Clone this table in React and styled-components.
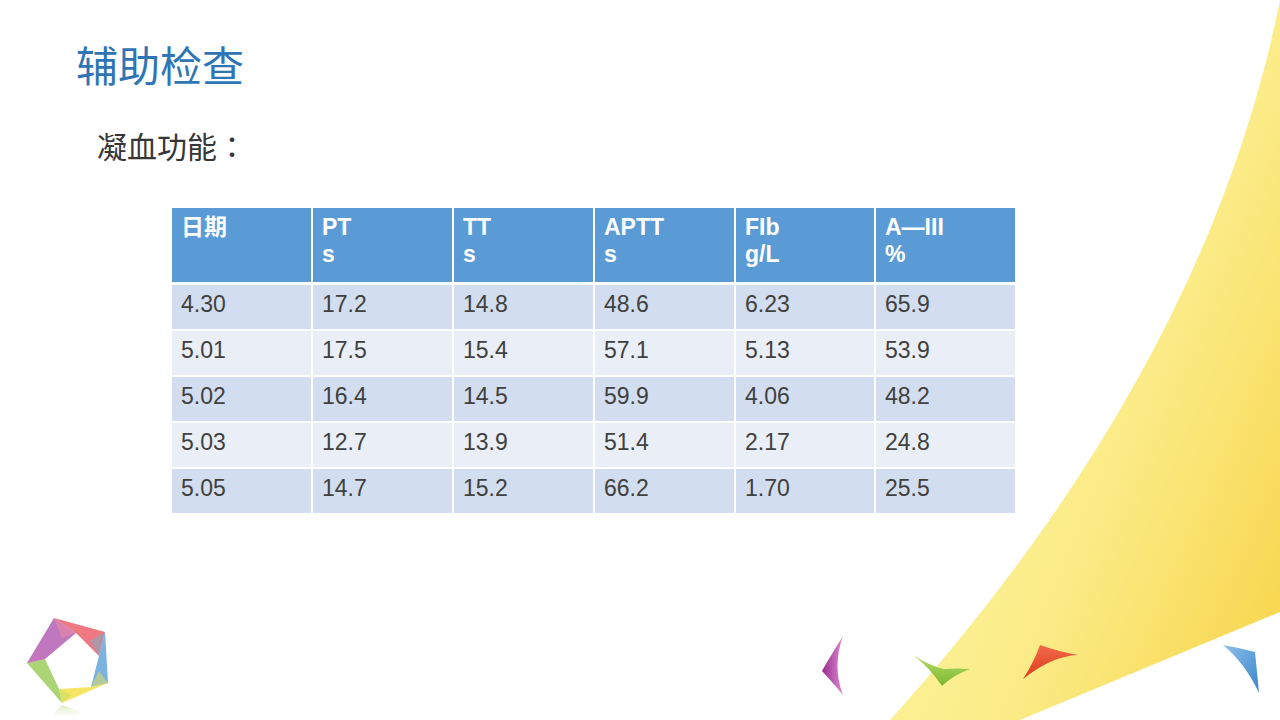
import React from 'react';
import styled, { createGlobalStyle } from 'styled-components';

const GlobalStyle = createGlobalStyle`
  html, body {
    margin: 0;
    padding: 0;
    background: #ffffff;
  }
`;

const Slide = styled.div`
  position: relative;
  width: 1280px;
  height: 720px;
  overflow: hidden;
  background: #ffffff;
  font-family: "Liberation Sans", "Noto Sans CJK SC", sans-serif;
`;

const Backdrop = styled.svg`
  position: absolute;
  left: 0;
  top: 0;
  width: 1280px;
  height: 720px;
  pointer-events: none;
`;

const Content = styled.div`
  position: relative;
  display: flex;
  flex-direction: column;
  padding: 43px 0 0 76px;
`;

const Title = styled.h1`
  margin: 0;
  font-family: "Noto Sans CJK SC", sans-serif;
  font-size: 42px;
  line-height: 42px;
  font-weight: 400;
  color: #2f75b5;
`;

const Subtitle = styled.h2`
  margin: 45px 0 0 21px;
  font-family: "Noto Sans CJK SC", sans-serif;
  font-size: 30px;
  line-height: 31px;
  font-weight: 400;
  color: #363636;
`;

const Colon = styled.span`
  font-family: "Noto Sans CJK TC", sans-serif;
`;

const Table = styled.table`
  margin: 47px 0 0 96px;
  border-collapse: separate;
  border-spacing: 0;
  table-layout: fixed;
  width: 843px;
  font-family: "Liberation Sans", "Noto Sans CJK SC", sans-serif;
  font-size: 23px;
  line-height: 27px;
`;

const Col = styled.col`
  width: ${(p) => p.$w}px;
`;

const HeadCell = styled.th`
  border-right: 2px solid #ffffff;
  border-bottom: 3px solid #ffffff;
  &:last-child {
    border-right: none;
  }
  background: #5b9bd5;
  color: #ffffff;
  font-weight: 700;
  text-align: left;
  vertical-align: top;
  padding: 6px 9px 14px;
  height: 54px;
`;

const Cell = styled.td`
  border-right: 2px solid #ffffff;
  border-bottom: 2px solid #ffffff;
  &:last-child {
    border-right: none;
  }
  background: ${(p) => (p.$odd ? '#d2deef' : '#eaeff7')};
  color: #404040;
  text-align: left;
  vertical-align: top;
  padding: 6px 9px 11px;
  height: 27px;
`;

const headers = [
  ['日期'],
  ['PT', 's'],
  ['TT', 's'],
  ['APTT', 's'],
  ['FIb', 'g/L'],
  ['A—III', '%'],
];

const rows = [
  ['4.30', '17.2', '14.8', '48.6', '6.23', '65.9'],
  ['5.01', '17.5', '15.4', '57.1', '5.13', '53.9'],
  ['5.02', '16.4', '14.5', '59.9', '4.06', '48.2'],
  ['5.03', '12.7', '13.9', '51.4', '2.17', '24.8'],
  ['5.05', '14.7', '15.2', '66.2', '1.70', '25.5'],
];

const colWidths = [141, 141, 141, 141, 140, 139];

const Decorations = () => (
  <Backdrop viewBox="0 0 1280 720">
    <defs>
      <linearGradient id="swoosh" x1="900" y1="480" x2="1280" y2="640" gradientUnits="userSpaceOnUse">
        <stop offset="0" stopColor="#fcf39c" />
        <stop offset="0.45" stopColor="#fbec88" />
        <stop offset="1" stopColor="#f8d64e" />
      </linearGradient>
      <linearGradient id="purple" x1="0" y1="0" x2="1" y2="0">
        <stop offset="0" stopColor="#9b2b92" />
        <stop offset="1" stopColor="#d98ad2" />
      </linearGradient>
      <linearGradient id="green" x1="0" y1="0" x2="0" y2="1">
        <stop offset="0" stopColor="#b9dc6a" />
        <stop offset="1" stopColor="#7cb82f" />
      </linearGradient>
      <linearGradient id="red" x1="0" y1="0" x2="0" y2="1">
        <stop offset="0" stopColor="#f26b4a" />
        <stop offset="1" stopColor="#dc3a1e" />
      </linearGradient>
      <linearGradient id="blue" x1="0" y1="0" x2="1" y2="1">
        <stop offset="0" stopColor="#8cc0ea" />
        <stop offset="1" stopColor="#3b85cc" />
      </linearGradient>
      <linearGradient id="reflect" x1="0" y1="0" x2="0" y2="1">
        <stop offset="0" stopColor="#c8e29a" stopOpacity="0.7" />
        <stop offset="1" stopColor="#ffffff" stopOpacity="0" />
      </linearGradient>
    </defs>

    {/* yellow swoosh */}
    <path
      d="M1280 0 C1232 240 1106 480 890 720 L1020 720 L1280 612 Z"
      fill="url(#swoosh)"
    />

    {/* small darts */}
    <path d="M843 636 Q828 660 822 671 Q834 684 843 695 Q832 666 843 636 Z" fill="url(#purple)" />
    <path d="M913 655 Q930 666 944 669 Q958 668 970 669 Q952 676 942 686 Q930 668 913 655 Z" fill="url(#green)" />
    <path d="M1040 645 Q1060 652 1078 655 Q1052 656 1023 679 Q1034 662 1040 645 Z" fill="url(#red)" />
    <path d="M1223 645 Q1240 648 1255 652 Q1257 672 1259 693 Q1245 663 1223 645 Z" fill="url(#blue)" />

    {/* pentagon logo */}
    <g opacity="0.85">
      <polygon points="54,618 105,632 99,656 76,633" fill="#e83a4a" opacity="0.8" />
      <polygon points="105,632 108,683 91,687 99,656" fill="#3d8fd1" opacity="0.8" />
      <polygon points="108,683 62,703 59,689 91,687" fill="#f3dc2c" opacity="0.85" />
      <polygon points="62,703 27,663 45,659 59,689" fill="#8cc63f" opacity="0.85" />
      <polygon points="27,663 54,618 76,633 45,659" fill="#a33aa3" opacity="0.8" />
      <polygon points="54,618 76,633 62,638" fill="#f07a8a" opacity="0.5" />
      <polygon points="105,632 99,656 90,641" fill="#5aa8c8" opacity="0.5" />
      <polygon points="108,683 91,687 99,671" fill="#e8e03a" opacity="0.5" />
      <polygon points="62,703 59,689 72,695" fill="#b8d84a" opacity="0.5" />
      <polygon points="27,663 45,659 39,648" fill="#c060b0" opacity="0.5" />
    </g>
    <polygon points="48,720 62,705 80,712 76,720" fill="url(#reflect)" />
  </Backdrop>
);

const App = () => (
  <Slide>
    <GlobalStyle />
    <Decorations />
    <Content>
      <Title>辅助检查</Title>
      <Subtitle>
        凝血功能<Colon>：</Colon>
      </Subtitle>
      <Table>
        <colgroup>
          {colWidths.map((w, i) => (
            <Col key={i} $w={w} />
          ))}
        </colgroup>
        <thead>
          <tr>
            {headers.map((h, i) => (
              <HeadCell key={i}>
                {h.map((line, j) => (
                  <div key={j}>{line}</div>
                ))}
              </HeadCell>
            ))}
          </tr>
        </thead>
        <tbody>
          {rows.map((r, i) => (
            <tr key={i}>
              {r.map((v, j) => (
                <Cell key={j} $odd={i % 2 === 0}>
                  {v}
                </Cell>
              ))}
            </tr>
          ))}
        </tbody>
      </Table>
    </Content>
  </Slide>
);

export default App;
